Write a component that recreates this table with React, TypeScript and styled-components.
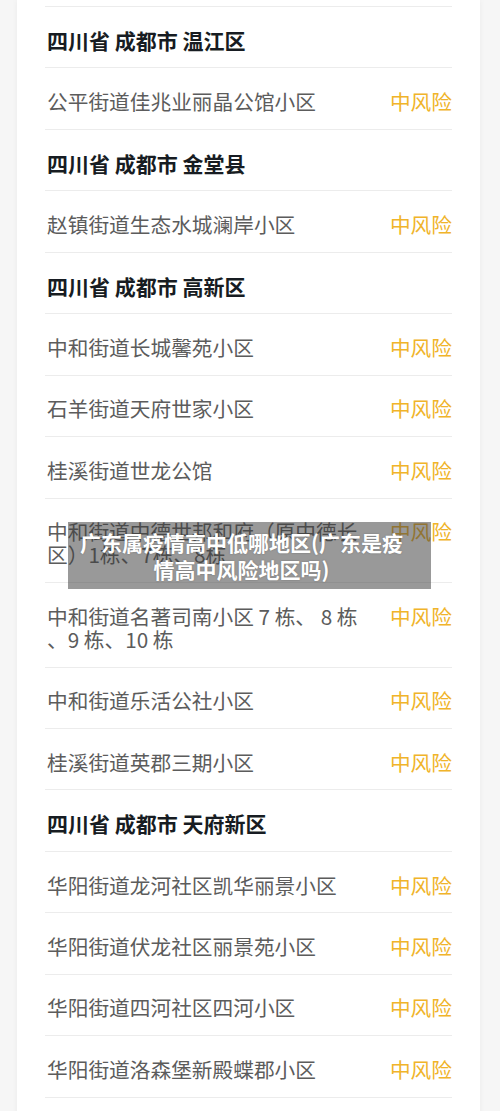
import React from "react";
import styled, { createGlobalStyle } from "styled-components";

const GlobalStyle = createGlobalStyle`
  html, body {
    margin: 0;
    padding: 0;
    background: #f6f6f6;
    font-family: "Noto Sans CJK SC", "Noto Sans", sans-serif;
  }
  #root {
    position: relative;
    height: 1111px;
    overflow: hidden;
  }
`;

const Page = styled.div`
  padding: 0 20px 0 17px;
`;

const Card = styled.div`
  background: #ffffff;
  padding: 0 28px 40px;
  box-shadow: 0 0 6px rgba(0, 0, 0, 0.05);
`;

const CutTop = styled.div`
  height: 6px;
  border-bottom: 1px solid #ececec;
`;

const Header = styled.div`
  padding: 21.7px 0 15.77px 2px;
  border-bottom: 1px solid #ececec;
  font-size: 21px;
  line-height: 23px;
  font-weight: 700;
  color: #171c22;
  white-space: pre;
`;

const Row = styled.div`
  display: flex;
  justify-content: space-between;
  align-items: flex-start;
  padding: 21.7px 0 15.77px 2px;
  border-bottom: 1px solid #ececec;
  font-size: 20.7px;
  line-height: 23px;
`;

const Name = styled.div`
  color: #5c5c5c;
  max-width: 330px;
`;

const Risk = styled.div`
  color: #f0b42a;
  white-space: nowrap;
`;

const Overlay = styled.div`
  position: absolute;
  top: 522px;
  left: 68px;
  width: 363px;
  height: 67px;
  box-sizing: border-box;
  padding: 0 20px 0 4px;
  background: rgba(60, 60, 60, 0.52);
  display: flex;
  align-items: center;
  justify-content: center;
  text-align: center;
  color: #ffffff;
  font-size: 21px;
  line-height: 27px;
  font-weight: 700;
  text-shadow: 0 0 2px rgba(0, 0, 0, 0.25);
`;

type Item = { name: React.ReactNode };
type Group = { title: string; items: Item[] };

const groups: Group[] = [
  {
    title: "四川省 成都市 温江区",
    items: [{ name: "公平街道佳兆业丽晶公馆小区" }],
  },
  {
    title: "四川省 成都市 金堂县",
    items: [{ name: "赵镇街道生态水城澜岸小区" }],
  },
  {
    title: "四川省 成都市 高新区",
    items: [
      { name: "中和街道长城馨苑小区" },
      { name: "石羊街道天府世家小区" },
      { name: "桂溪街道世龙公馆" },
      {
        name: (
          <>
            中和街道中德世邦和府（原中德长
            <br />
            区）1栋、7栋、8栋
          </>
        ),
      },
      {
        name: (
          <>
            中和街道名著司南小区 7 栋、 8 栋
            <br />
            、9 栋、10 栋
          </>
        ),
      },
      { name: "中和街道乐活公社小区" },
      { name: "桂溪街道英郡三期小区" },
    ],
  },
  {
    title: "四川省 成都市 天府新区",
    items: [
      { name: "华阳街道龙河社区凯华丽景小区" },
      { name: "华阳街道伏龙社区丽景苑小区" },
      { name: "华阳街道四河社区四河小区" },
      { name: "华阳街道洛森堡新殿蝶郡小区" },
    ],
  },
];

export default function App() {
  return (
    <>
      <GlobalStyle />
      <Page>
        <Card>
          <CutTop />
          {groups.map((g) => (
            <React.Fragment key={g.title}>
              <Header>{g.title}</Header>
              {g.items.map((it, i) => (
                <Row key={i}>
                  <Name>{it.name}</Name>
                  <Risk>中风险</Risk>
                </Row>
              ))}
            </React.Fragment>
          ))}
        </Card>
      </Page>
      <Overlay>
        广东属疫情高中低哪地区(广东是疫
        <br />
        情高中风险地区吗)
      </Overlay>
    </>
  );
}
